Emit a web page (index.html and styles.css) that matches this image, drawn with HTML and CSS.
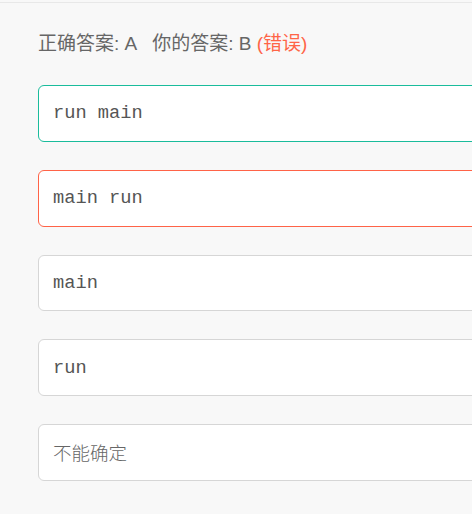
FILE: index.html
```html
<!DOCTYPE html>
<html lang="zh">
<head>
<meta charset="utf-8">
<link rel="stylesheet" href="styles.css">
</head>
<body>
<div class="page">
  <div class="result">
    <span class="item">正确答案: A</span>
    <span class="item">你的答案: B <span class="wrong">(错误)</span></span>
  </div>
  <div class="options">
    <div class="option correct"><span class="code">run main</span></div>
    <div class="option incorrect"><span class="code">main run</span></div>
    <div class="option"><span class="code">main</span></div>
    <div class="option"><span class="code">run</span></div>
    <div class="option"><span class="plain">不能确定</span></div>
  </div>
</div>
</body>
</html>
```
FILE: styles.css
```css
html, body {
  margin: 0;
  padding: 0;
  background: #f8f8f8;
  overflow: hidden;
}
.page {
  margin-top: 2px;
  border-top: 1px solid #e8e8e8;
  padding: 27px 0 0 38px;
  width: 560px;
}
.result {
  font-family: "Liberation Sans", "Noto Sans CJK SC", sans-serif;
  font-size: 19px;
  color: #666;
  line-height: 28px;
  display: flex;
  gap: 15px;
}
.wrong {
  color: #ff6547;
}
.options {
  margin-top: 27px;
  display: flex;
  flex-direction: column;
  gap: 28px;
}
.option {
  height: 56.75px;
  box-sizing: border-box;
  border: 1px solid #d6d6d6;
  border-radius: 6px;
  background: #fff;
  display: flex;
  align-items: center;
  padding-left: 14px;
}
.option.correct {
  border-color: #1abc9c;
}
.option.incorrect {
  border-color: #ff6347;
}
.code {
  font-family: "Liberation Mono", "Noto Sans CJK SC", monospace;
  font-size: 18.7px;
  color: #555;
}
.plain {
  font-family: "Noto Sans CJK SC", sans-serif;
  font-size: 18.5px;
  color: #666;
  font-weight: 300;
}
```
